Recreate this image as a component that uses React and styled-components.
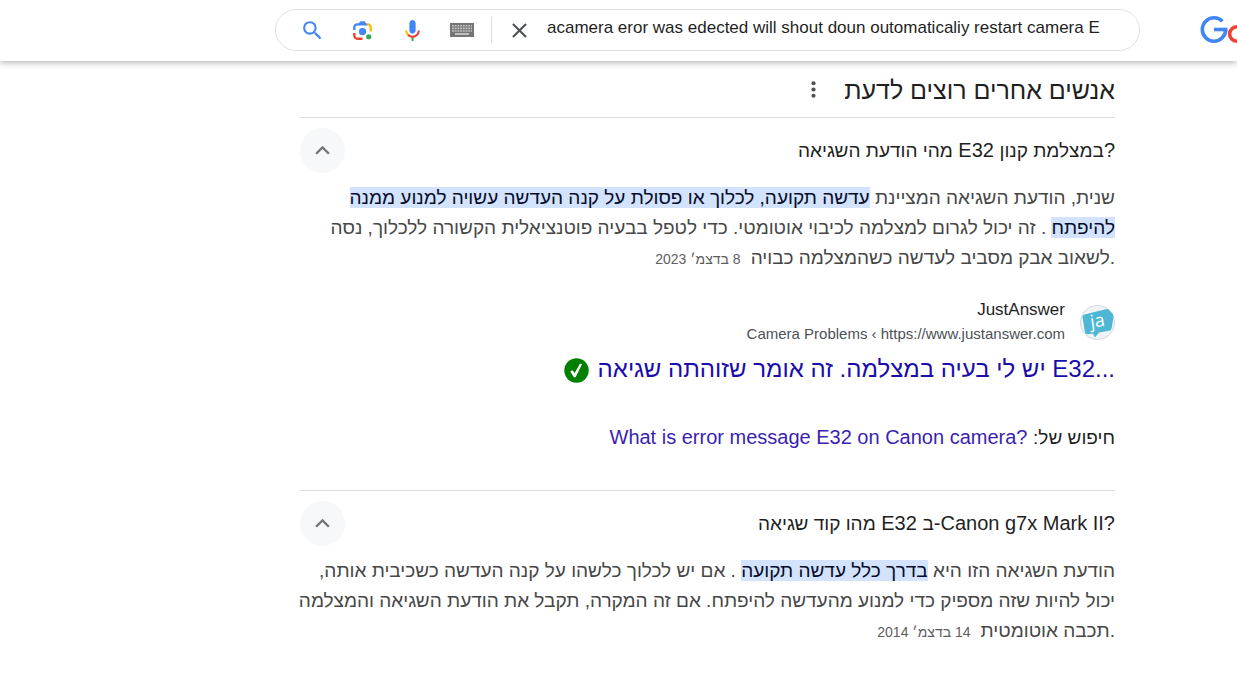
import React, { useState } from "react";
import styled, { createGlobalStyle } from "styled-components";

const GlobalStyle = createGlobalStyle`
  * {
    box-sizing: border-box;
  }
  body {
    margin: 0;
    background: #fff;
    color: #1f1f1f;
    font-family: "Liberation Sans", Arial, sans-serif;
    overflow-x: hidden;
  }
`;

const Header = styled.header`
  display: flex;
  align-items: flex-start;
  gap: 60px;
  padding: 9px 0 10px 275px;
  background: #fff;
  box-shadow: 0 1px 7px rgba(32, 33, 36, 0.4);
`;
const SearchForm = styled.form`
  display: flex;
  align-items: center;
  flex: 1;
  min-width: 0;
  height: 42px;
  padding: 0 24px;
  border: 1px solid #dfe1e5;
  border-radius: 24px;
`;
const Tools = styled.div`
  display: flex;
  align-items: center;
  gap: 25px;
`;
const IconButton = styled.button`
  display: flex;
  flex-shrink: 0;
  padding: 0;
  border: 0;
  background: none;
  color: ${(props) => props.$color || "#4d5156"};
  cursor: pointer;
`;
const Separator = styled.span`
  width: 1px;
  height: 26px;
  margin: 0 15px 0 17px;
  background: #dadce0;
`;
const SearchInput = styled.input`
  flex: 1;
  min-width: 0;
  height: 40px;
  margin-left: 15px;
  padding: 0 0 4px;
  border: 0;
  outline: 0;
  background: none;
  color: #1f1f1f;
  font-family: inherit;
  font-size: 17px;
`;
const LogoLink = styled.a`
  display: flex;
  width: 37px;
  overflow: hidden;
`;

const Main = styled.main`
  margin: 0 122px 0 300px;
`;
const HeadingRow = styled.div`
  display: flex;
  align-items: center;
  gap: 18px;
  height: 56px;
`;
const Heading = styled.h2`
  margin: 0;
  padding-top: 2px;
  font-size: 25px;
  font-weight: 400;
  line-height: 36px;
`;
const Item = styled.section`
  padding: 10px 0 37px;
  border-top: 1px solid #dadce0;
  &:last-child {
    padding-bottom: 0;
  }
`;
const QuestionRow = styled.div`
  display: flex;
  align-items: center;
  justify-content: space-between;
`;
const Question = styled.h3`
  margin: 0;
  font-size: 20px;
  font-weight: 400;
  line-height: 30px;
`;
const Hebrew = styled.span`
  font-size: 19px;
`;
const Toggle = styled.button`
  display: flex;
  align-items: center;
  justify-content: center;
  width: 45px;
  height: 45px;
  padding: 0;
  border: 0;
  border-radius: 50%;
  background: #f7f8f9;
  color: #70757a;
  cursor: pointer;
`;
const Answer = styled.p`
  margin: 10px 0 0 -8px;
  color: #474747;
  font-size: 19px;
  line-height: 30px;
`;
const Highlight = styled.mark`
  background: #d3e3fd;
  color: #040c28;
`;
const AnswerDate = styled.span`
  margin-right: 10px;
  color: #5e5e5e;
  font-size: 14px;
  line-height: 16px;
`;
const Source = styled.div`
  display: flex;
  align-items: center;
  gap: 15px;
  margin-top: 25px;
`;
const SourceName = styled.div`
  font-size: 17px;
  line-height: 24px;
`;
const SourceUrl = styled.cite`
  display: block;
  color: #4d5156;
  font-size: 15px;
  font-style: normal;
  line-height: 24px;
`;
const TitleRow = styled.div`
  display: flex;
  align-items: flex-end;
  gap: 9px;
  margin-top: 9px;
`;
const TitleLink = styled.a`
  color: #1a0dab;
  font-size: 24px;
  line-height: 28px;
  text-decoration: none;
`;
const SearchFor = styled.p`
  margin: 39px 0 0;
  font-size: 20px;
  line-height: 30px;
`;
const SearchForLink = styled.a`
  color: #3a1fb0;
  text-decoration: none;
`;

const SearchIcon = () => (
  <svg width="25" height="25" viewBox="0 0 24 24" fill="currentColor">
    <path d="M15.5 14h-.79l-.28-.27A6.47 6.47 0 0 0 16 9.5 6.5 6.5 0 1 0 9.5 16c1.61 0 3.09-.59 4.23-1.57l.27.28v.79l5 4.99L20.49 19l-4.99-5zm-6 0C7.01 14 5 11.99 5 9.5S7.01 5 9.5 5 14 7.01 14 9.5 11.99 14 9.5 14z" />
  </svg>
);

const LensIcon = () => (
  <svg width="25" height="25" viewBox="0 0 192 192">
    <circle fill="#34a853" cx="144" cy="144" r="20" />
    <circle fill="#4285f4" cx="96" cy="104" r="28" />
    <path fill="#ea4335" d="M24 135.2c0 18.11 14.69 32.8 32.8 32.8H96v-18l-40.1-.1c-7.8 0-13.9-7.19-13.9-15.9v-18H24v19.2z" />
    <path fill="#fbbc04" d="M168 72.8c0-18.11-14.69-32.8-32.8-32.8H116l20 18c7.8 0 14 7.29 14 16v30h18V72.8z" />
    <path fill="#4285f4" d="M112 24H80L68 40H56.8C38.69 40 24 54.69 24 72.8V92h18V74c0-8.71 6.2-16 14-16h80l-12-18-12-16z" />
  </svg>
);

const MicIcon = () => (
  <svg width="25" height="25" viewBox="0 0 24 24">
    <path fill="#4285f4" d="M12 15c1.66 0 3-1.31 3-2.97V5.01C15 3.35 13.66 2 12 2S9 3.34 9 5.01v7.02C9 13.69 10.34 15 12 15z" />
    <path fill="#34a853" d="M11 18.08h2V22h-2z" />
    <path fill="#fbbc04" d="M7.05 16.87C5.78 15.54 5 14.04 5 12h2c0 1.45.56 2.42 1.47 3.38v.32l-1.15 1.18z" />
    <path fill="#ea4335" d="M12 16.93a4.97 5.25 0 0 1-3.54-1.55l-1.41 1.49C8.31 18.21 10.07 19 12 19c3.87 0 6.99-2.92 6.99-7H17c0 2.92-2.24 4.93-5 4.93z" />
  </svg>
);

const KeyboardIcon = () => (
  <svg width="24" height="14" viewBox="0 0 24 14">
    <path fill="#757575" d="M0 0h24v14H0z" />
    <path stroke="#c4c4c4" strokeWidth="1.6" strokeDasharray="1.9 .8" d="M2 2.8h20M2 5.4h20M2 8h20" />
    <path stroke="#d8d8d8" strokeWidth="1.5" d="M5 11h14" />
  </svg>
);

const CloseIcon = () => (
  <svg width="25" height="25" viewBox="0 0 24 24" fill="currentColor">
    <path d="M19 6.41L17.59 5 12 10.59 6.41 5 5 6.41 10.59 12 5 17.59 6.41 19 12 13.41 17.59 19 19 17.59 13.41 12z" />
  </svg>
);

const MoreIcon = () => (
  <svg width="25" height="25" viewBox="0 0 24 24" fill="currentColor">
    <circle cx="12" cy="6" r="2" />
    <circle cx="12" cy="12" r="2" />
    <circle cx="12" cy="18" r="2" />
  </svg>
);

const ChevronIcon = () => (
  <svg width="29" height="29" viewBox="0 0 24 24" fill="currentColor">
    <path d="M12 8l-6 6 1.41 1.41L12 10.83l4.59 4.58L18 14z" />
  </svg>
);

const CheckBadge = () => (
  <svg width="25" height="25" viewBox="0 0 25 25">
    <circle cx="12.5" cy="12.5" r="12.2" fill="#008000" />
    <path d="M6.2 13.6l2.2-1.4 2.3 2.8 5.200-9.300 2.200.4-6.500 13.100h-1.700z" fill="#fff" />
  </svg>
);

const SiteIcon = () => (
  <svg width="35" height="35" viewBox="0 0 35 35">
    <circle cx="17.5" cy="17.5" r="17" fill="#f1f3f4" stroke="#d5d8dc" />
    <path d="M4.500 9.500Q2.500 10 2.500 12L5 27.500Q5.500 29.500 8 29.200L13 28.500l2 4 4-5 10-1.700q2.500-.5 2.800-3L33.500 12q0-2.500-1.500-4l-3-3q-1.500-1.200-3.500-.8z" fill="#4db8d5" />
    <text x="17.5" y="22" fill="#fff" fontFamily="Open Sans, sans-serif" fontSize="18" textAnchor="middle" transform="rotate(-8 17.5 17.5)">
      ja
    </text>
  </svg>
);

// Left part of the logo, the rest runs out of the window
const Logo = () => (
  <svg width="37" height="42" viewBox="0 0 37 42" fill="none">
    <circle cx="14" cy="20.5" r="11.7" stroke="#4285f4" strokeWidth="3.6" pathLength="360" strokeDasharray="316 44" />
    <path d="M14 20.5h13.400" stroke="#4285f4" strokeWidth="3.6" />
    <circle cx="36.8" cy="25" r="7.2" stroke="#ea4335" strokeWidth="3.6" />
  </svg>
);

const App = () => {
  const [search, setSearch] = useState(
    "acamera eror was edected will shout doun outomaticaliy restart camera E"
  );

  return (
    <>
      <GlobalStyle />
      <Header>
        <SearchForm role="search" onSubmit={(e) => e.preventDefault()}>
          <Tools>
            <IconButton type="submit" aria-label="חיפוש" $color="#4285f4">
              <SearchIcon />
            </IconButton>
            <IconButton type="button" aria-label="חיפוש לפי תמונה">
              <LensIcon />
            </IconButton>
            <IconButton type="button" aria-label="חיפוש קולי">
              <MicIcon />
            </IconButton>
            <IconButton type="button" aria-label="מקלדת">
              <KeyboardIcon />
            </IconButton>
          </Tools>
          <Separator />
          <IconButton type="button" aria-label="ניקוי" onClick={() => setSearch("")}>
            <CloseIcon />
          </IconButton>
          <SearchInput
            aria-label="חיפוש"
            value={search}
            onChange={(e) => setSearch(e.target.value)}
          />
        </SearchForm>
        <LogoLink href="#" aria-label="Google">
          <Logo />
        </LogoLink>
      </Header>

      <Main dir="rtl" lang="he">
        <HeadingRow>
          <Heading>אנשים אחרים רוצים לדעת</Heading>
          <IconButton type="button" aria-label="אפשרויות">
            <MoreIcon />
          </IconButton>
        </HeadingRow>

        <Item>
          <QuestionRow>
            <Question dir="ltr">
              <Hebrew>מהי הודעת השגיאה</Hebrew> E32 <Hebrew>במצלמת קנון</Hebrew>?
            </Question>
            <Toggle type="button" aria-label="סגירה" aria-expanded="true">
              <ChevronIcon />
            </Toggle>
          </QuestionRow>
          <Answer>
            <span dir="ltr">
              שנית, הודעת השגיאה המציינת{" "}
              <Highlight>
                עדשה תקועה, לכלוך או פסולת על קנה העדשה עשויה למנוע ממנה להיפתח
              </Highlight>{" "}
              . זה יכול לגרום למצלמה לכיבוי אוטומטי. כדי לטפל בבעיה פוטנציאלית
              הקשורה ללכלוך, נסה לשאוב אבק מסביב לעדשה כשהמצלמה כבויה.
            </span>
            <AnswerDate>8 בדצמ׳ 2023</AnswerDate>
          </Answer>
          <Source>
            <SiteIcon />
            <div>
              <SourceName>JustAnswer</SourceName>
              <SourceUrl dir="ltr">Camera Problems ‹ https://www.justanswer.com</SourceUrl>
            </div>
          </Source>
          <TitleRow>
            <TitleLink href="#" dir="ltr">
              יש לי בעיה במצלמה. זה אומר שזוהתה שגיאה E32...
            </TitleLink>
            <CheckBadge />
          </TitleRow>
          <SearchFor>
            <Hebrew>חיפוש של:</Hebrew>{" "}
            <SearchForLink href="#" dir="ltr">
              What is error message E32 on Canon camera?
            </SearchForLink>
          </SearchFor>
        </Item>

        <Item>
          <QuestionRow>
            <Question dir="ltr">
              <Hebrew>מהו קוד שגיאה</Hebrew> E32 <Hebrew>ב</Hebrew>-Canon g7x Mark II?
            </Question>
            <Toggle type="button" aria-label="סגירה" aria-expanded="true">
              <ChevronIcon />
            </Toggle>
          </QuestionRow>
          <Answer>
            <span dir="ltr">
              הודעת השגיאה הזו היא <Highlight>בדרך כלל עדשה תקועה</Highlight> . אם
              יש לכלוך כלשהו על קנה העדשה כשכיבית אותה, יכול להיות שזה מספיק כדי
              למנוע מהעדשה להיפתח. אם זה המקרה, תקבל את הודעת השגיאה והמצלמה תכבה
              אוטומטית.
            </span>
            <AnswerDate>14 בדצמ׳ 2014</AnswerDate>
          </Answer>
        </Item>
      </Main>
    </>
  );
};

export default App;
